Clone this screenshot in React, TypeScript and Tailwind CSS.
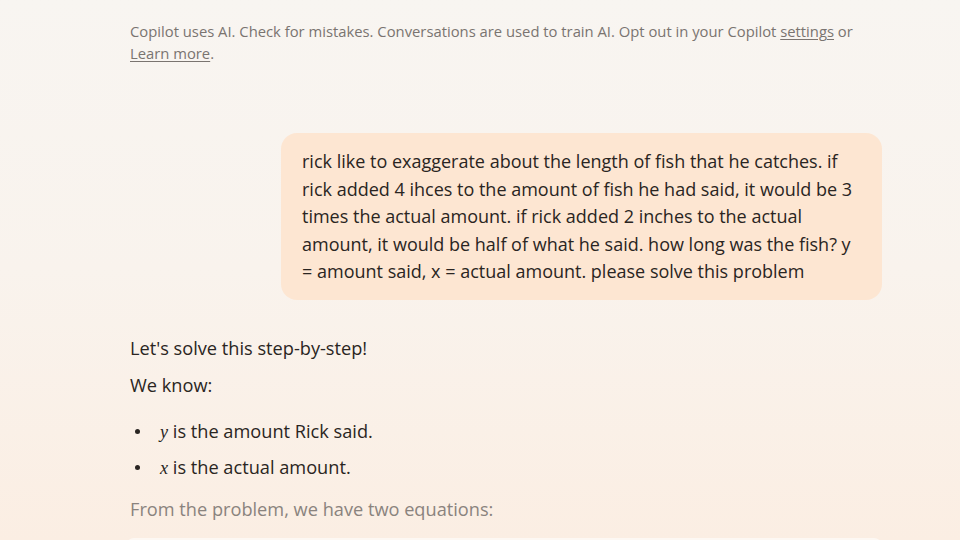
import React from 'react';

const bubbleLines = [
  'rick like to exaggerate about the length of fish that he catches. if',
  'rick added 4 ihces to the amount of fish he had said, it would be 3',
  'times the actual amount. if rick added 2 inches to the actual',
  'amount, it would be half of what he said. how long was the fish? y',
  '= amount said, x = actual amount. please solve this problem',
];

const serif = { fontFamily: '"Liberation Serif", serif' };

const App: React.FC = () => {
  return (
    <div
      className="w-[960px] h-[540px] overflow-hidden bg-gradient-to-b from-[#f8f5f1] via-[#f9f3ed] to-[#fbeee3] text-[#2a2522]"
      style={{ fontFamily: '"Open Sans", sans-serif' }}
    >
      <div className="w-[752px] ml-[130px] pt-[20px]">
        <p className="w-[740px] text-[14.8px] leading-[22px] text-[#7a7470]">
          Copilot uses AI. Check for mistakes. Conversations are used to train AI. Opt out in your Copilot{' '}
          <span className="underline underline-offset-2">settings</span> or{' '}
          <span className="underline underline-offset-2">Learn more</span>.
        </p>

        <div className="flex justify-end mt-[69px]">
          <div className="w-[601px] rounded-[16px] bg-[#fde6d2] px-[21px] pt-[15px] pb-[14px] text-[18px] leading-[27.5px]">
            {bubbleLines.map((line, i) => (
              <div key={i} className="whitespace-nowrap">
                {line}
              </div>
            ))}
          </div>
        </div>

        <div className="mt-[35px] text-[18.2px] leading-[26px]">
          <p>Let's solve this step-by-step!</p>
          <p className="mt-[11px]">We know:</p>
          <ul className="mt-[20px] flex flex-col gap-[9px]">
            <li className="flex items-center">
              <span className="w-[30px] pl-[5px]">
                <span className="block w-[5px] h-[5px] rounded-full bg-[#2a2522]"></span>
              </span>
              <span>
                <i style={serif}>y</i> is the amount Rick said.
              </span>
            </li>
            <li className="flex items-center">
              <span className="w-[30px] pl-[5px]">
                <span className="block w-[5px] h-[5px] rounded-full bg-[#2a2522]"></span>
              </span>
              <span>
                <i style={serif}>x</i> is the actual amount.
              </span>
            </li>
          </ul>
          <p className="mt-[15px] text-[#8a837e]">From the problem, we have two equations:</p>
          <div className="mt-[16px] -ml-[4px] h-[40px] rounded-[8px] bg-[#fdf8f3]"></div>
        </div>
      </div>
    </div>
  );
};

export default App;
